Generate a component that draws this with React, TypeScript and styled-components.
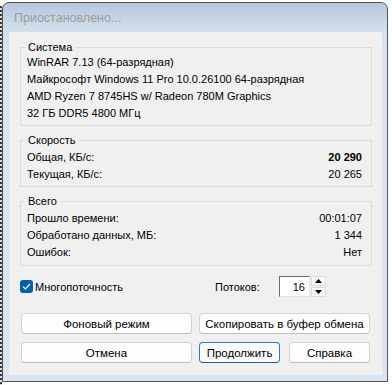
import styled, { createGlobalStyle } from "styled-components";

const GlobalStyle = createGlobalStyle`
  html, body {
    margin: 0;
    padding: 0;
  }
  body {
    background:
      repeating-linear-gradient(to bottom, #3a3a3a 0 2px, #d8d8d8 2px 4px) left 6px / 2px 100% no-repeat,
      #ffffff;
    font-family: "Liberation Sans", Arial, sans-serif;
    font-size: 11px;
    color: #000;
  }
`;

const Page = styled.div`
  padding: 2px 0 0 2px;
`;

const Window = styled.div`
  width: 386px;
  height: 380px;
  box-sizing: border-box;
  border: 1px solid #505356;
  border-radius: 7px 7px 0 0;
  background: linear-gradient(to bottom, #b8c8d9 0, #d3e0ee 29px, #d9e5f2 60px, #d9e5f2 100%);
  display: flex;
  flex-direction: column;
`;

const TitleBar = styled.div`
  height: 29px;
  display: flex;
  align-items: center;
  padding-left: 11px;
  font-size: 12.5px;
  color: #9b9b9b;
`;

const Client = styled.div`
  margin: 0 5px 0 6px;
  height: 343px;
  box-sizing: border-box;
  background: #f0f0f0;
  padding: 15px 10px 0 11px;
  display: flex;
  flex-direction: column;
  gap: 14px;
`;

const Group = styled.div<{ $pt: number; $pb: number }>`
  position: relative;
  border: 1px solid #dcdcdc;
  padding: ${(p) => p.$pt}px 9px ${(p) => p.$pb}px 6px;
`;

const Legend = styled.span`
  position: absolute;
  top: -8px;
  left: 4px;
  padding: 0 3px;
  line-height: 15px;
  background: #f0f0f0;
`;

const Line = styled.div`
  height: 17px;
  line-height: 17px;
  white-space: nowrap;
`;

const Row = styled.div`
  height: 17px;
  line-height: 17px;
  display: flex;
  justify-content: space-between;
  white-space: nowrap;
`;

const Value = styled.span<{ $bold?: boolean }>`
  font-weight: ${(p) => (p.$bold ? 700 : 400)};
`;

const OptionsRow = styled.div`
  margin-top: -4px;
  height: 21px;
  display: flex;
  align-items: center;
`;

const CheckLabel = styled.label`
  display: flex;
  align-items: center;
  gap: 2px;
`;

const CheckBox = styled.span`
  width: 13px;
  height: 13px;
  border-radius: 3px;
  background: #005fb8;
  display: flex;
  align-items: center;
  justify-content: center;
`;

const Threads = styled.div`
  margin-left: auto;
  margin-right: 46px;
  display: flex;
  align-items: center;
  height: 21px;
`;

const ThreadsLabel = styled.span`
  width: 64px;
`;

const SpinInput = styled.div`
  width: 31px;
  height: 21px;
  box-sizing: border-box;
  background: #fff;
  border-top: 1px solid #6d6d6d;
  border-left: 1px solid #6d6d6d;
  border-right: 1px solid #e3e3e3;
  border-bottom: 1px solid #e3e3e3;
  display: flex;
  align-items: center;
  justify-content: flex-end;
  padding-right: 4px;
`;

const SpinArrows = styled.div`
  margin-left: 1px;
  width: 15px;
  height: 21px;
  display: flex;
  flex-direction: column;
  justify-content: space-between;
`;

const SpinButton = styled.div`
  height: 10px;
  box-sizing: border-box;
  background: #fbfbfb;
  border: 1px solid #dadada;
  display: flex;
  align-items: center;
  justify-content: center;
`;

const ButtonsBlock = styled.div`
  margin-top: 2px;
  display: flex;
  flex-direction: column;
  gap: 8px;
`;

const ButtonRow = styled.div`
  display: flex;
  gap: 7px;
  padding-left: 1px;
`;

const Button = styled.button<{ $w: number; $ml?: number; $default?: boolean }>`
  width: ${(p) => p.$w}px;
  margin-left: ${(p) => p.$ml ?? 0}px;
  height: 21px;
  box-sizing: border-box;
  padding: 0;
  font: inherit;
  font-size: 11.5px;
  color: #000;
  background: #fdfdfd;
  border: 1px solid ${(p) => (p.$default ? "#2a78c6" : "#d3d3d3")};
  border-bottom-color: ${(p) => (p.$default ? "#1a5ea6" : "#bcbcbc")};
  border-radius: 4px;
`;

const Arrow = ({ up }: { up?: boolean }) => (
  <svg width="7" height="4" viewBox="0 0 7 4">
    <path d={up ? "M0 4 L3.5 0 L7 4 Z" : "M0 0 L3.5 4 L7 0 Z"} fill="#000" />
  </svg>
);

export default function App() {
  return (
    <Page>
      <GlobalStyle />
      <Window>
        <TitleBar>Приостановлено...</TitleBar>
        <Client>
          <Group $pt={6} $pb={3}>
            <Legend>Система</Legend>
            <Line>WinRAR 7.13 (64-разрядная)</Line>
            <Line>Майкрософт Windows 11 Pro 10.0.26100 64-разрядная</Line>
            <Line>AMD Ryzen 7 8745HS w/ Radeon 780M Graphics</Line>
            <Line>32 ГБ DDR5 4800 МГц</Line>
          </Group>
          <Group $pt={8} $pb={3}>
            <Legend>Скорость</Legend>
            <Row>
              <span>Общая, КБ/с:</span>
              <Value $bold>20 290</Value>
            </Row>
            <Row>
              <span>Текущая, КБ/с:</span>
              <Value>20 265</Value>
            </Row>
          </Group>
          <Group $pt={8} $pb={4}>
            <Legend>Всего</Legend>
            <Row>
              <span>Прошло времени:</span>
              <Value>00:01:07</Value>
            </Row>
            <Row>
              <span>Обработано данных, МБ:</span>
              <Value>1 344</Value>
            </Row>
            <Row>
              <span>Ошибок:</span>
              <Value>Нет</Value>
            </Row>
          </Group>
          <OptionsRow>
            <CheckLabel>
              <CheckBox>
                <svg width="9" height="7" viewBox="0 0 9 7">
                  <path d="M1 3.6 L3.4 6 L8 1" fill="none" stroke="#fff" strokeWidth="1.2" />
                </svg>
              </CheckBox>
              Многопоточность
            </CheckLabel>
            <Threads>
              <ThreadsLabel>Потоков:</ThreadsLabel>
              <SpinInput>16</SpinInput>
              <SpinArrows>
                <SpinButton>
                  <Arrow up />
                </SpinButton>
                <SpinButton>
                  <Arrow />
                </SpinButton>
              </SpinArrows>
            </Threads>
          </OptionsRow>
          <ButtonsBlock>
            <ButtonRow>
              <Button $w={171}>Фоновый режим</Button>
              <Button $w={171}>Скопировать в буфер обмена</Button>
            </ButtonRow>
            <ButtonRow>
              <Button $w={171}>Отмена</Button>
              <Button $w={81} $default>
                Продолжить
              </Button>
              <Button $w={81} $ml={2}>
                Справка
              </Button>
            </ButtonRow>
          </ButtonsBlock>
        </Client>
      </Window>
    </Page>
  );
}
